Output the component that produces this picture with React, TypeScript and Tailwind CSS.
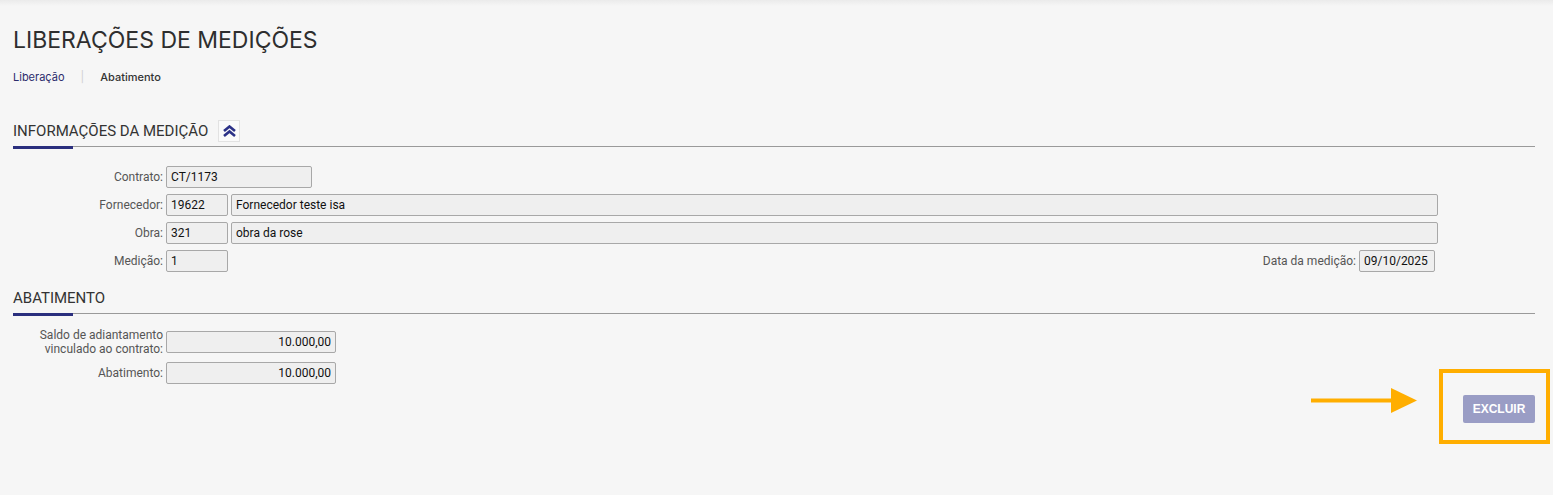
import React from "react";

function SectionHeader({ title, collapsible }: { title: string; collapsible?: boolean }) {
  return (
    <div>
      <div className="flex h-[22px] items-center">
        <h2 className="font-['Roboto'] text-[15px] leading-none text-[#333]">{title}</h2>
        {collapsible && (
          <button className="ml-[10px] flex h-[22px] w-[22px] items-center justify-center border border-[#e2e2e2] bg-[#fafafa]">
            <svg width="15" height="12" viewBox="0 0 15 12" fill="none">
              <path d="M2 6 L7.5 1.5 L13 6" stroke="#2b3187" strokeWidth="2.6" strokeLinejoin="miter" />
              <path d="M2 11 L7.5 6.5 L13 11" stroke="#2b3187" strokeWidth="2.6" strokeLinejoin="miter" />
            </svg>
          </button>
        )}
      </div>
      <div className="mt-[4px] flex items-start">
        <div className="h-[3px] w-[60px] bg-[#2b2f7e]" />
        <div className="h-px flex-1 bg-[#9a9a9a]" />
      </div>
    </div>
  );
}

function Field({ value, className = "", right }: { value: string; className?: string; right?: boolean }) {
  return (
    <div
      className={`flex h-[22px] items-center rounded-[2px] border border-[#a8a8a8] bg-[#efefef] px-[4px] font-['Roboto'] text-[12px] text-[#111] ${
        right ? "justify-end" : ""
      } ${className}`}
    >
      {value}
    </div>
  );
}

function Label({ children }: { children: React.ReactNode }) {
  return (
    <div className="w-[153px] shrink-0 pr-[3px] text-right font-['Roboto'] text-[12px] leading-[14px] text-[#555]">
      {children}
    </div>
  );
}

export default function App() {
  return (
    <div className="min-h-screen bg-[#f6f6f6]">
      <div className="h-[6px] bg-linear-to-b from-[#ebebeb] to-[#f6f6f6]" />
      <div className="pl-[13px] pr-[18px]">
        <h1 className="mt-[19px] font-['Inter'] text-[23px] leading-[30px] text-[#2e2e2e]">
          LIBERAÇÕES DE MEDIÇÕES
        </h1>
        <nav className="mt-[14px] flex items-center font-['Inter'] text-[11px] leading-[16px]">
          <a className="text-[#2c2c6c]">Liberação</a>
          <span className="mx-[16px] text-[#d0d0d0]">|</span>
          <a className="font-medium text-[#333]">Abatimento</a>
        </nav>

        <div className="mt-[35px]">
          <SectionHeader title="INFORMAÇÕES DA MEDIÇÃO" collapsible />
        </div>

        <div className="mt-[17px] flex w-[1425px] flex-col gap-[6px]">
          <div className="flex items-center">
            <Label>Contrato:</Label>
            <Field value="CT/1173" className="w-[146px]" />
          </div>
          <div className="flex items-center">
            <Label>Fornecedor:</Label>
            <Field value="19622" className="w-[62px]" />
            <Field value="Fornecedor teste isa" className="ml-[3px] flex-1" />
          </div>
          <div className="flex items-center">
            <Label>Obra:</Label>
            <Field value="321" className="w-[62px]" />
            <Field value="obra da rose" className="ml-[3px] flex-1" />
          </div>
          <div className="flex items-center pr-[3px]">
            <Label>Medição:</Label>
            <Field value="1" className="w-[62px]" />
            <div className="ml-auto flex items-center">
              <span className="mr-[3px] font-['Roboto'] text-[12px] text-[#555]">Data da medição:</span>
              <Field value="09/10/2025" className="w-[76px]" />
            </div>
          </div>
        </div>

        <div className="mt-[15px]">
          <SectionHeader title="ABATIMENTO" />
        </div>

        <div className="mt-[12px] flex items-start justify-between">
          <div className="flex flex-col gap-[6px]">
            <div className="flex items-center">
              <Label>
                Saldo de adiantamento
                <br />
                vinculado ao contrato:
              </Label>
              <Field value="10.000,00" className="w-[170px]" right />
            </div>
            <div className="flex items-center">
              <Label>Abatimento:</Label>
              <Field value="10.000,00" className="w-[170px]" right />
            </div>
          </div>

          <div className="mr-[-15px] mt-[41px] flex items-start">
            <svg className="mr-[22px] mt-[19px]" width="106" height="25" viewBox="0 0 106 25">
              <rect x="0" y="10.5" width="82" height="4" fill="#ffae00" />
              <polygon points="80,0 106,12.5 80,25" fill="#ffae00" />
            </svg>
            <div className="border-[4px] border-[#ffae00] pb-[17px] pl-[20px] pr-[11px] pt-[22px]">
              <button className="flex h-[28px] w-[72px] items-center justify-center rounded-[2px] bg-[#9a9dc5] font-['Liberation_Sans'] text-[12px] font-bold text-white">
                EXCLUIR
              </button>
            </div>
          </div>
        </div>
      </div>
    </div>
  );
}
